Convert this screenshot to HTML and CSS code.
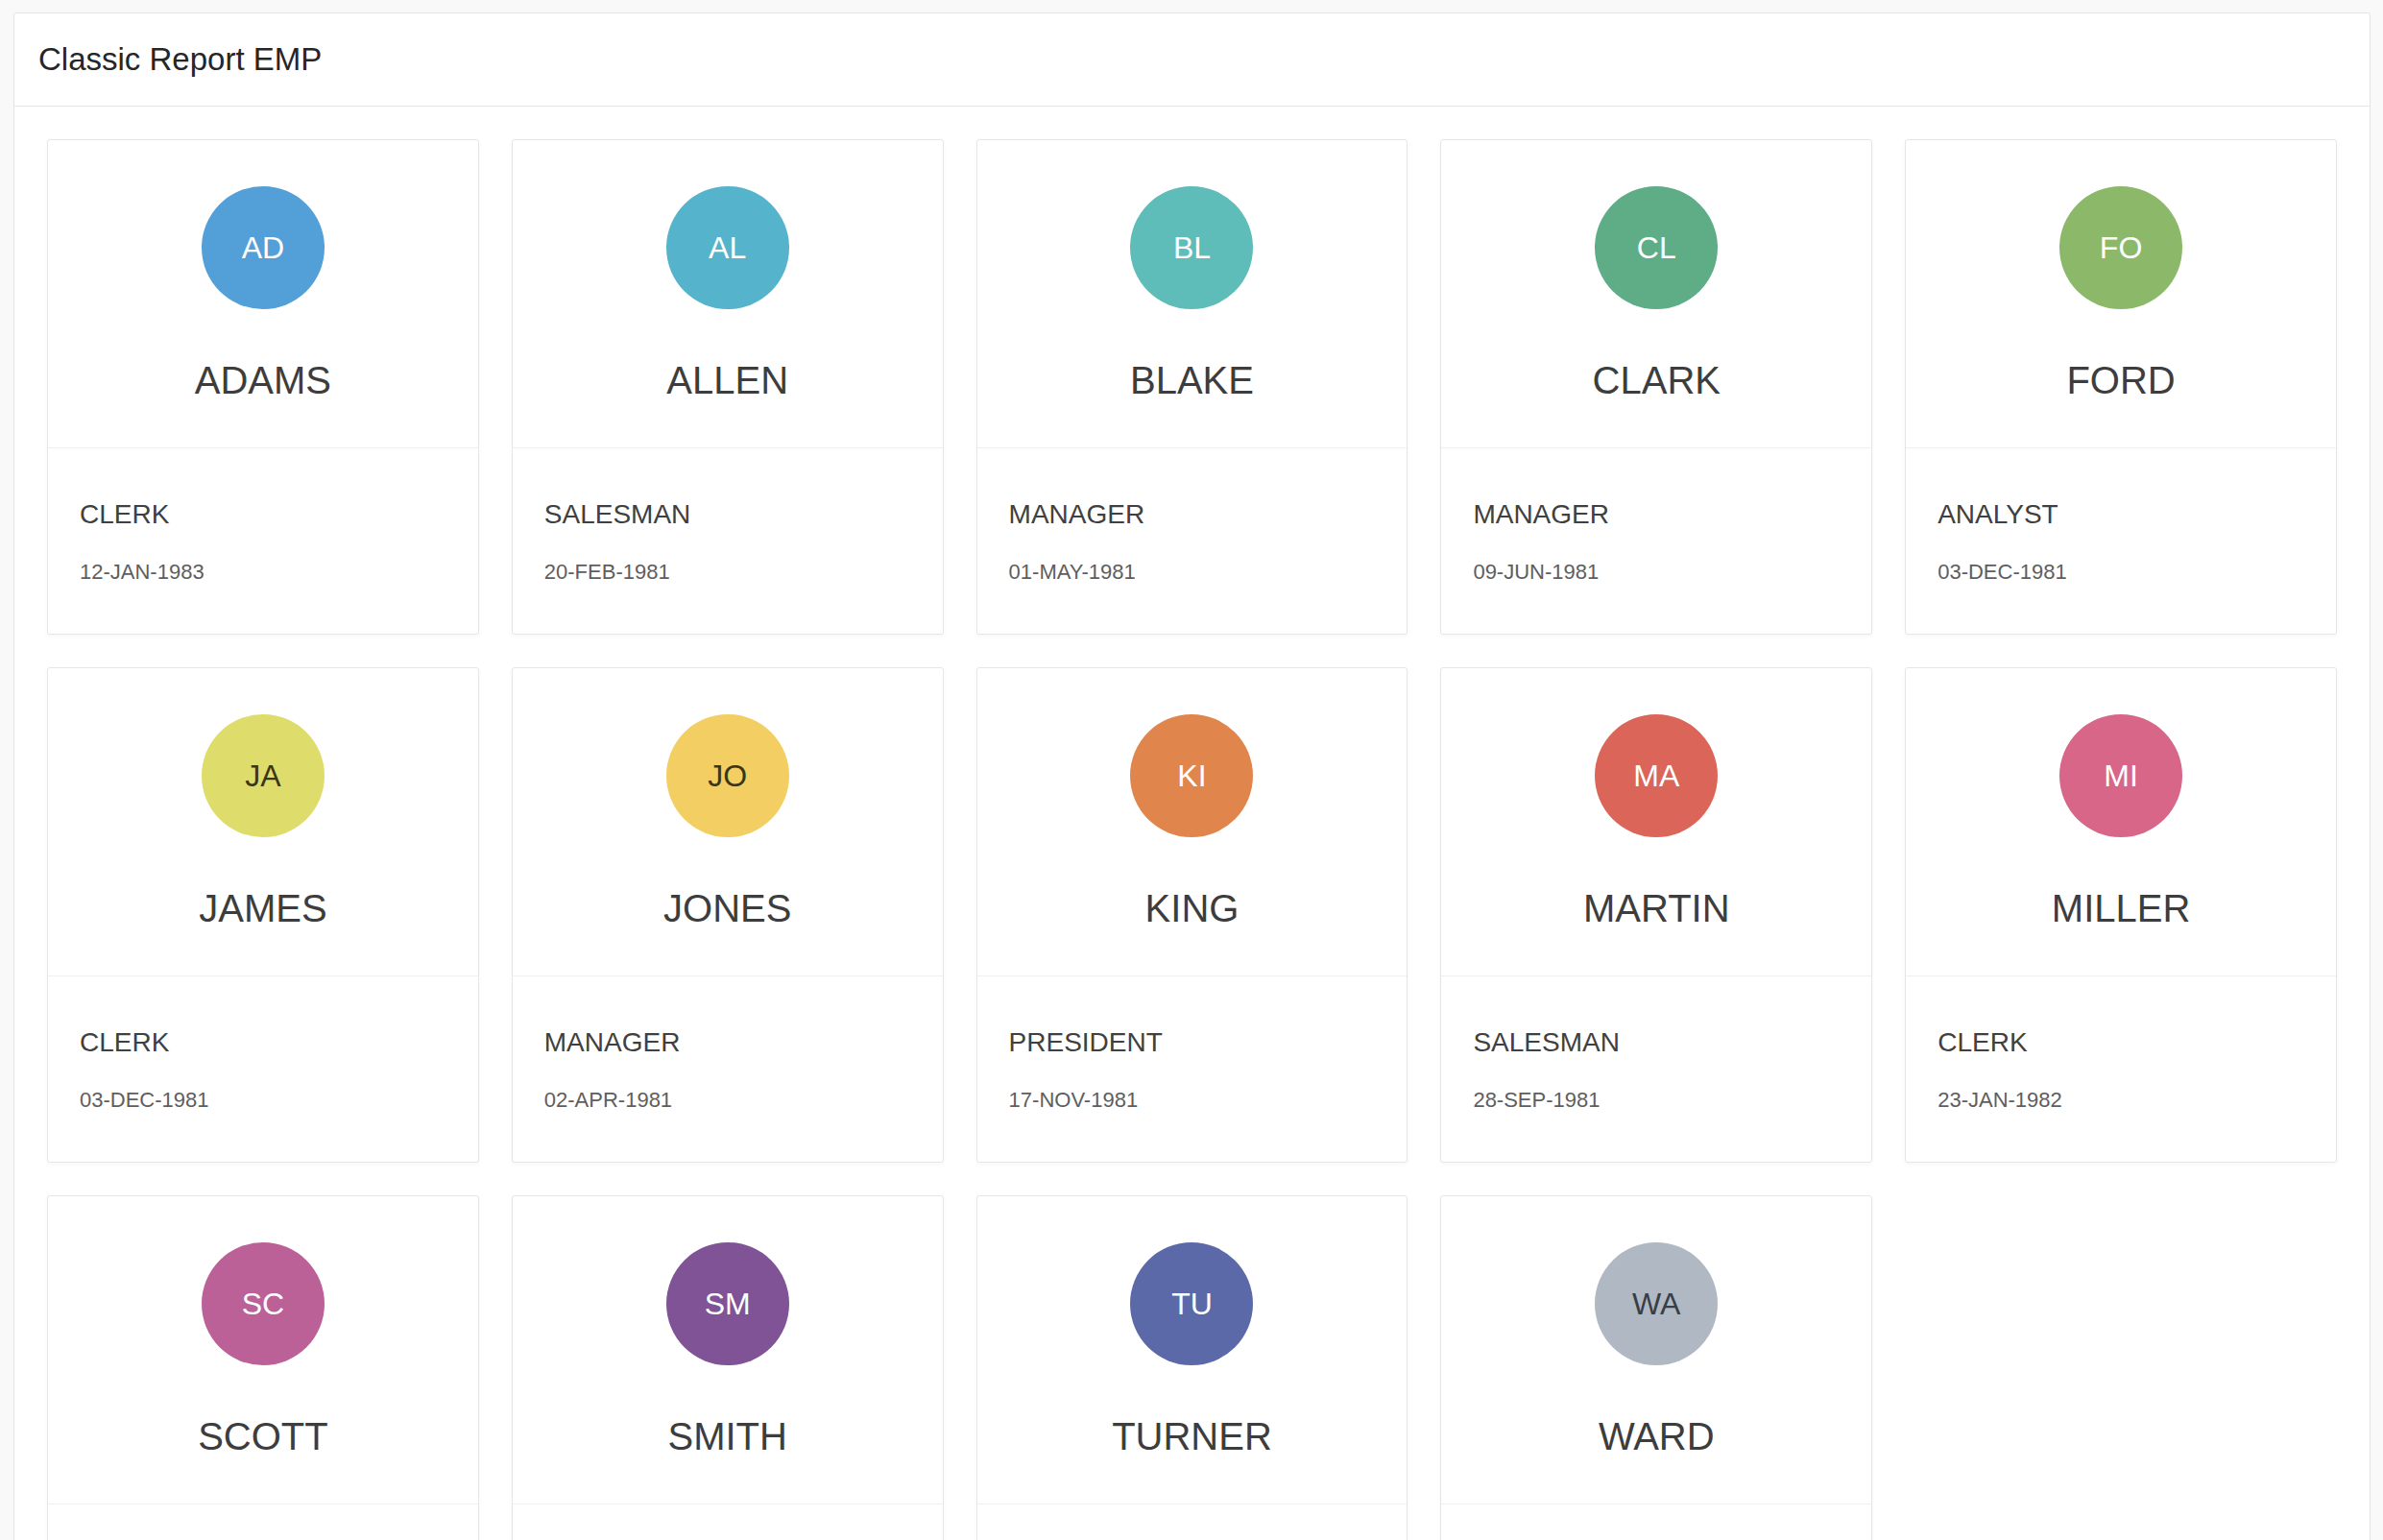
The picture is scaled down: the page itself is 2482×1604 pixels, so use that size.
FILE: index.html
```html
<!DOCTYPE html>
<html lang="en">
<head>
<meta charset="utf-8">
<title>Classic Report EMP</title>
<link rel="stylesheet" href="styles.css">
</head>
<body>
<section class="region">
  <header class="region-header">
    <h2 class="region-title">Classic Report EMP</h2>
  </header>
  <div class="region-body">
    <ul class="cards">
      <li class="card">
        <div class="card-top"><span class="avatar c1">AD</span><h3 class="card-name">ADAMS</h3></div>
        <div class="card-bottom"><p class="card-job">CLERK</p><p class="card-date">12-JAN-1983</p></div>
      </li>
      <li class="card">
        <div class="card-top"><span class="avatar c2">AL</span><h3 class="card-name">ALLEN</h3></div>
        <div class="card-bottom"><p class="card-job">SALESMAN</p><p class="card-date">20-FEB-1981</p></div>
      </li>
      <li class="card">
        <div class="card-top"><span class="avatar c3">BL</span><h3 class="card-name">BLAKE</h3></div>
        <div class="card-bottom"><p class="card-job">MANAGER</p><p class="card-date">01-MAY-1981</p></div>
      </li>
      <li class="card">
        <div class="card-top"><span class="avatar c4">CL</span><h3 class="card-name">CLARK</h3></div>
        <div class="card-bottom"><p class="card-job">MANAGER</p><p class="card-date">09-JUN-1981</p></div>
      </li>
      <li class="card">
        <div class="card-top"><span class="avatar c5">FO</span><h3 class="card-name">FORD</h3></div>
        <div class="card-bottom"><p class="card-job">ANALYST</p><p class="card-date">03-DEC-1981</p></div>
      </li>
      <li class="card">
        <div class="card-top"><span class="avatar c6 dark">JA</span><h3 class="card-name">JAMES</h3></div>
        <div class="card-bottom"><p class="card-job">CLERK</p><p class="card-date">03-DEC-1981</p></div>
      </li>
      <li class="card">
        <div class="card-top"><span class="avatar c7 dark">JO</span><h3 class="card-name">JONES</h3></div>
        <div class="card-bottom"><p class="card-job">MANAGER</p><p class="card-date">02-APR-1981</p></div>
      </li>
      <li class="card">
        <div class="card-top"><span class="avatar c8">KI</span><h3 class="card-name">KING</h3></div>
        <div class="card-bottom"><p class="card-job">PRESIDENT</p><p class="card-date">17-NOV-1981</p></div>
      </li>
      <li class="card">
        <div class="card-top"><span class="avatar c9">MA</span><h3 class="card-name">MARTIN</h3></div>
        <div class="card-bottom"><p class="card-job">SALESMAN</p><p class="card-date">28-SEP-1981</p></div>
      </li>
      <li class="card">
        <div class="card-top"><span class="avatar c10">MI</span><h3 class="card-name">MILLER</h3></div>
        <div class="card-bottom"><p class="card-job">CLERK</p><p class="card-date">23-JAN-1982</p></div>
      </li>
      <li class="card">
        <div class="card-top"><span class="avatar c11">SC</span><h3 class="card-name">SCOTT</h3></div>
        <div class="card-bottom"><p class="card-job">ANALYST</p><p class="card-date">09-DEC-1982</p></div>
      </li>
      <li class="card">
        <div class="card-top"><span class="avatar c12">SM</span><h3 class="card-name">SMITH</h3></div>
        <div class="card-bottom"><p class="card-job">CLERK</p><p class="card-date">17-DEC-1980</p></div>
      </li>
      <li class="card">
        <div class="card-top"><span class="avatar c13">TU</span><h3 class="card-name">TURNER</h3></div>
        <div class="card-bottom"><p class="card-job">SALESMAN</p><p class="card-date">08-SEP-1981</p></div>
      </li>
      <li class="card">
        <div class="card-top"><span class="avatar c14 dark-gray">WA</span><h3 class="card-name">WARD</h3></div>
        <div class="card-bottom"><p class="card-job">SALESMAN</p><p class="card-date">22-FEB-1981</p></div>
      </li>
    </ul>
  </div>
</section>
</body>
</html>
```

FILE: styles.css
```css
* {
  box-sizing: border-box;
}

html {
  background: #f9f9f9;
}

body {
  margin: 13px 13px 13px 14px;
  font-family: "Liberation Sans", Arial, Helvetica, sans-serif;
  color: #404040;
  background: #f9f9f9;
}

.region {
  background: #ffffff;
  border: 1px solid #e3e3e3;
  border-radius: 3px;
}

.region-header {
  height: 97px;
  display: flex;
  align-items: center;
  padding: 0 25px;
  border-bottom: 1px solid #e6e6e6;
}

.region-title {
  margin: 0;
  font-size: 33px;
  font-weight: 400;
  color: #262626;
  line-height: 40px;
}

.region-body {
  padding: 34px;
}

.cards {
  list-style: none;
  margin: 0;
  padding: 0;
  display: grid;
  grid-template-columns: repeat(5, 1fr);
  gap: 34px;
}

.card {
  background: #ffffff;
  border: 1px solid #e6e6e6;
  border-radius: 3px;
  box-shadow: 0 2px 5px rgba(0, 0, 0, 0.035);
}

.card-top {
  display: flex;
  flex-direction: column;
  align-items: center;
  padding: 48px 20px 46px;
  border-bottom: 1px solid #efefef;
}

.avatar {
  width: 128px;
  height: 128px;
  border-radius: 50%;
  display: flex;
  align-items: center;
  justify-content: center;
  font-size: 32px;
  color: #ffffff;
  line-height: 1;
}

.avatar.dark {
  color: #3b3616;
}

.avatar.dark-gray {
  color: #383e47;
}

.c1 { background: #539fd8; }
.c2 { background: #55b3cc; }
.c3 { background: #5ebcb9; }
.c4 { background: #5ead87; }
.c5 { background: #8bb869; }
.c6 { background: #dedd6b; }
.c7 { background: #f3cf63; }
.c8 { background: #e0864d; }
.c9 { background: #db6559; }
.c10 { background: #d76688; }
.c11 { background: #bc6198; }
.c12 { background: #7f5395; }
.c13 { background: #5b69a8; }
.c14 { background: #b0b8c3; }

.card-name {
  margin: 50px 0 0;
  font-size: 40px;
  line-height: 48px;
  font-weight: 400;
  color: #3d3d3d;
}

.card-bottom {
  padding: 52px 33px 51px;
}

.card-job {
  margin: 0;
  font-size: 28px;
  line-height: 34px;
  color: #404040;
}

.card-date {
  margin: 30px 0 0;
  font-size: 22px;
  line-height: 26px;
  color: #5e5e5e;
}
```
